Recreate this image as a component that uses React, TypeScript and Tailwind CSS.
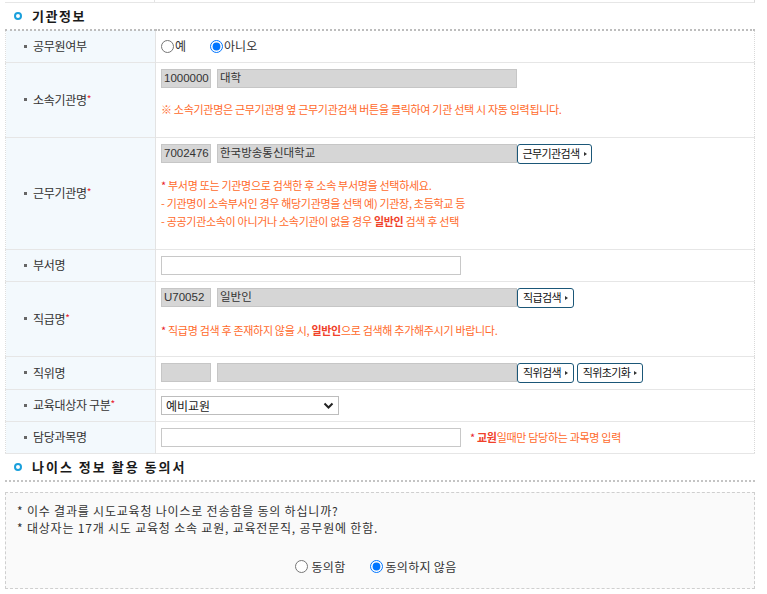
const font = { fontFamily: '"Noto Sans CJK KR", "Noto Sans", sans-serif' };
const mixed = { fontFamily: '"Liberation Sans", "Noto Sans CJK KR", sans-serif' };

const SectionTitle = ({ title, wide }: { title: string; wide?: boolean }) => (
  <div className="flex items-center gap-[10px] pl-[14px] h-[26px]">
    <span className="w-[8px] h-[8px] rounded-full border-2 border-[#1aa0dc] bg-white" />
    <h2
      className={`text-[13px] font-bold text-[#1a1a1a] ${wide ? "tracking-[2px]" : "tracking-[1.5px]"}`}
    >
      {title}
    </h2>
  </div>
);

const Label = ({ text, required }: { text: string; required?: boolean }) => (
  <td className="w-[150px] bg-[#f3f9fd] border-r border-[#e3e3e3] pl-[18px] align-middle">
    <div className="flex items-center gap-[6px] text-[12px] text-[#333] tracking-[-0.3px]">
      <span className="w-[3px] h-[3px] bg-[#666]" />
      <span>
        {text}
        {required && <span className="text-[#e8202a] text-[10px] align-top">*</span>}
      </span>
    </div>
  </td>
);

const GrayInput = ({ value, w }: { value: string; w: string }) => (
  <div
    className={`${w} h-[19px] bg-[#d6d6d6] border border-[#c6c6c6] px-[2px] text-[11.5px] leading-[17px] text-[#333] overflow-hidden whitespace-nowrap`}
    style={mixed}
  >
    {value}
  </div>
);

const SearchBtn = ({ label, w }: { label: string; w: string }) => (
  <button
    className={`${w} h-[20px] border border-[#1b5778] rounded-[3px] bg-white flex items-center justify-center gap-[4px] text-[11px] tracking-[-0.6px] text-[#111] leading-none whitespace-nowrap px-0`}
  >
    {label}
    <span className="w-0 h-0 border-y-[2px] border-y-transparent border-l-[3px] border-l-[#333]" />
  </button>
);

const Note = ({ children }: { children: React.ReactNode }) => (
  <p className="text-[11px] text-[#ff6a2b] leading-[18px] tracking-[-0.3px]">{children}</p>
);

const Star = () => <span className="text-[#e8202a]">*</span>;

const Row = ({ children, h }: { children: React.ReactNode; h: string }) => (
  <tr className={`${h} border-b border-[#e6e6e6]`}>{children}</tr>
);

export default function App() {
  return (
    <div className="w-[767px] h-[594px] bg-white overflow-hidden" style={font}>
      <div className="ml-[5px] w-[750px] h-[3px] border-b border-[#e6e6e6] border-r border-r-[#d9d9d9] flex">
        <div className="w-[150px] border-r border-[#e3e3e3]" />
      </div>

      <SectionTitle title="기관정보" />

      <table className="ml-[5px] w-[750px] border-collapse border-t-2 border-dotted border-t-[#bdbdbd] border-l border-l-[#dedede] border-r border-r-[#d9d9d9]">
        <tbody>
          <Row h="h-[32px]">
            <Label text="공무원여부" />
            <td className="pl-[5px]">
              <div className="flex items-center text-[12px] text-[#333]">
                <label className="flex items-center gap-[1px]">
                  <input type="radio" name="gw" className="w-[13px] h-[13px] m-0" />예
                </label>
                <label className="flex items-center gap-[1px] ml-[24px]">
                  <input type="radio" name="gw" defaultChecked className="w-[13px] h-[13px] m-0" />아니오
                </label>
              </div>
            </td>
          </Row>

          <Row h="h-[75px]">
            <Label text="소속기관명" required />
            <td className="pl-[5px] align-top pt-[6px]">
              <div className="flex gap-[6px]">
                <GrayInput value="1000000" w="w-[50px]" />
                <GrayInput value="대학" w="w-[300px]" />
              </div>
              <div className="mt-[12px]">
                <Note>※ 소속기관명은 근무기관명 옆 근무기관검색 버튼을 클릭하여 기관 선택 시 자동 입력됩니다.</Note>
              </div>
            </td>
          </Row>

          <Row h="h-[112px]">
            <Label text="근무기관명" required />
            <td className="pl-[5px] align-top pt-[6px]">
              <div className="flex items-center">
                <GrayInput value="7002476" w="w-[50px]" />
                <div className="w-[6px]" />
                <GrayInput value="한국방송통신대학교" w="w-[300px]" />
                <SearchBtn label="근무기관검색" w="w-[75px]" />
              </div>
              <div className="mt-[12px]">
                <Note>
                  <Star /> 부서명 또는 기관명으로 검색한 후 소속 부서명을 선택하세요.
                </Note>
                <Note>- 기관명이 소속부서인 경우 해당기관명을 선택 예) 기관장, 초등학교 등</Note>
                <Note>
                  - 공공기관소속이 아니거나 소속기관이 없을 경우 <b className="text-[#f0412a]">일반인</b> 검색 후 선택
                </Note>
              </div>
            </td>
          </Row>

          <Row h="h-[32px]">
            <Label text="부서명" />
            <td className="pl-[5px]">
              <div className="w-[300px] h-[19px] border border-[#c8c8c8] bg-white" />
            </td>
          </Row>

          <Row h="h-[75px]">
            <Label text="직급명" required />
            <td className="pl-[5px] align-top pt-[6px]">
              <div className="flex items-center">
                <GrayInput value="U70052" w="w-[50px]" />
                <div className="w-[6px]" />
                <GrayInput value="일반인" w="w-[300px]" />
                <SearchBtn label="직급검색" w="w-[57px]" />
              </div>
              <div className="mt-[13px]">
                <Note>
                  <Star /> 직급명 검색 후 존재하지 않을 시, <b className="text-[#f0412a]">일반인</b>으로 검색해 추가해주시기 바랍니다.
                </Note>
              </div>
            </td>
          </Row>

          <Row h="h-[33px]">
            <Label text="직위명" />
            <td className="pl-[5px]">
              <div className="flex items-center">
                <GrayInput value="" w="w-[50px]" />
                <div className="w-[6px]" />
                <GrayInput value="" w="w-[300px]" />
                <SearchBtn label="직위검색" w="w-[57px]" />
                <div className="w-[3px]" />
                <SearchBtn label="직위초기화" w="w-[66px]" />
              </div>
            </td>
          </Row>

          <Row h="h-[32px]">
            <Label text="교육대상자 구분" required />
            <td className="pl-[5px]">
              <div className="relative w-[178px] h-[19px] border border-[#bdbdbd] bg-white text-[12px] leading-[17px] text-[#222] pl-[4px]">
                예비교원
                <svg className="absolute right-[4px] top-[5px]" width="11" height="8" viewBox="0 0 11 8">
                  <path d="M1.5 1.5 L5.5 5.5 L9.5 1.5" stroke="#222" strokeWidth="2" fill="none" />
                </svg>
              </div>
            </td>
          </Row>

          <Row h="h-[32px]">
            <Label text="담당과목명" />
            <td className="pl-[5px]">
              <div className="flex items-center gap-[9px]">
                <div className="w-[300px] h-[19px] border border-[#c8c8c8] bg-white" />
                <span className="text-[11px] text-[#ff6a2b] tracking-[-0.3px]">
                  <Star /> <b className="text-[#f0412a]">교원</b>일때만 담당하는 과목명 입력
                </span>
              </div>
            </td>
          </Row>
        </tbody>
      </table>

      <SectionTitle title="나이스 정보 활용 동의서" wide />
      <div className="ml-[5px] w-[750px] border-t-2 border-dotted border-[#c4c4c4]" />

      <div className="ml-[5px] mt-[10px] w-[750px] h-[97px] border border-dashed border-[#cfcfcf] bg-[#fafafa] px-[11px] pt-[9px] text-[12px] text-[#333] leading-[17px] tracking-[0.8px]">
        <p>* 이수 결과를 시도교육청 나이스로 전송함을 동의 하십니까?</p>
        <p>* 대상자는 17개 시도 교육청 소속 교원, 교육전문직, 공무원에 한함.</p>
        <div className="flex justify-center items-center gap-[24px] mt-[22px] tracking-[0.3px] pr-[8px]">
          <label className="flex items-center gap-[3px]">
            <input type="radio" name="ag" className="w-[13px] h-[13px] m-0" />동의함
          </label>
          <label className="flex items-center gap-[3px]">
            <input type="radio" name="ag" defaultChecked className="w-[13px] h-[13px] m-0" />동의하지 않음
          </label>
        </div>
      </div>
    </div>
  );
}
